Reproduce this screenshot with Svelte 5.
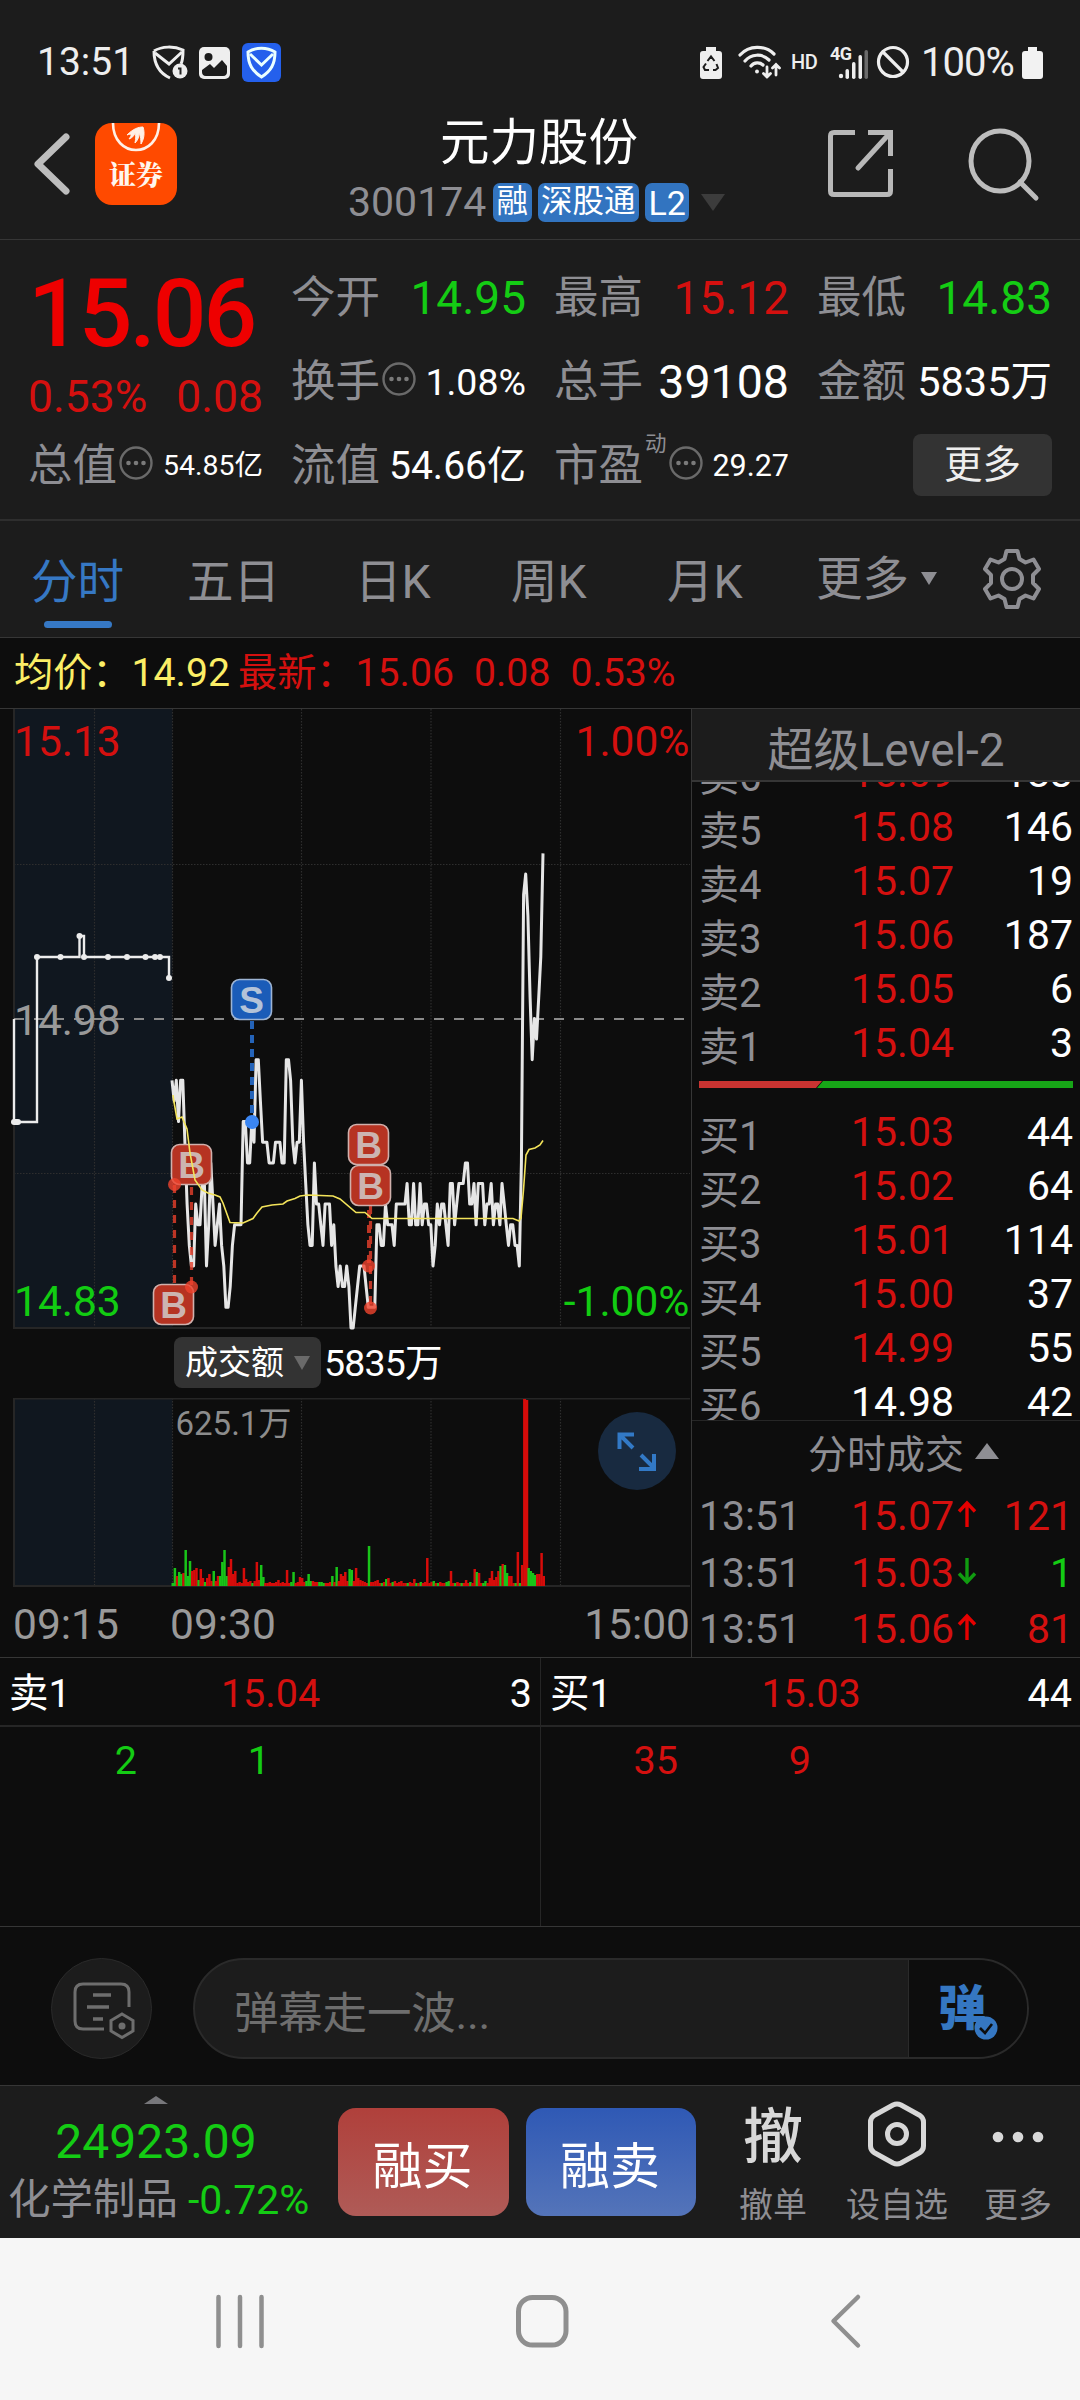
<script>
  const stats = [
    { label: '今开', value: '14.95', tone: 'down', size: 46 },
    { label: '最高', value: '15.12', tone: 'up', size: 46 },
    { label: '最低', value: '14.83', tone: 'down', size: 46 },
    { label: '换手', info: true, value: '1.08%', size: 37.5 },
    { label: '总手', value: '39108', size: 46.5 },
    { label: '金额', value: '5835万', size: 41.5 },
    { label: '总值', info: true, value: '54.85亿', size: 28.5 },
    { label: '流值', value: '54.66亿', size: 39 },
    { label: '市盈', sup: '动', info: true, value: '29.27', size: 30.5 },
  ];

  const tabs = ['分时', '五日', '日K', '周K', '月K'];

  const sells = [
    ['卖6', '15.09', '183'],
    ['卖5', '15.08', '146'],
    ['卖4', '15.07', '19'],
    ['卖3', '15.06', '187'],
    ['卖2', '15.05', '6'],
    ['卖1', '15.04', '3'],
  ];
  const buys = [
    ['买1', '15.03', '44'],
    ['买2', '15.02', '64'],
    ['买3', '15.01', '114'],
    ['买4', '15.00', '37'],
    ['买5', '14.99', '55'],
    ['买6', '14.98', '42'],
  ];
  const prevClose = '14.98';

  const trades = [
    { time: '13:51', price: '15.07', dir: 'up', qty: '121' },
    { time: '13:51', price: '15.03', dir: 'down', qty: '1' },
    { time: '13:51', price: '15.06', dir: 'up', qty: '81' },
  ];

  const queues = [
    { label: '卖1', price: '15.04', qty: '3', tone: 'down', orders: ['2', '1'] },
    { label: '买1', price: '15.03', qty: '44', tone: 'up', orders: ['35', '9'] },
  ];

  // one entry per minute from 09:30, in cents above 14.00
  const prices = [
    95, 94, 95, 93, 95, 95, 92, 89, 87, 86, 86, 89, 88, 88, 90, 90, 86, 88, 91, 89,
    87, 88, 89, 87, 86, 84, 84, 85, 87, 88, 88, 88, 88, 93, 93, 91, 91, 93, 92, 96,
    96, 94, 92, 92, 92, 91, 91, 91, 92, 92, 92, 91, 91, 96, 96, 95, 92, 91, 92, 92,
    95, 92, 90, 88, 87, 87, 91, 89, 89, 88, 87, 89, 89, 89, 87, 88, 86, 85, 86, 85,
    85, 86, 85, 83, 83, 84, 85, 86, 86, 86, 85, 84, 84, 84, 84, 88, 88, 87, 87, 89,
    88, 88, 88, 87, 89, 89, 89, 89, 89, 90, 88, 88, 90, 88, 88, 90, 88, 89, 89, 88,
    88, 86, 87, 89, 88, 89, 89, 88, 87, 90, 90, 88, 89, 90, 90, 90, 91, 91, 89, 89,
    90, 88, 90, 90, 90, 88, 89, 89, 90, 88, 89, 89, 88, 90, 89, 88, 87, 88, 88, 87,
    87, 86, 91, 104, 105, 103, 99, 96, 98, 97, 99, 101, 106,
  ];

  // same minutes, bar height; negative is a falling minute
  const volumes = [
    -3, -18, 10, -14, -12, 13, -36, -10, -25, 15, 16, 18, -6, 17, 8, -4, 8, 12, 5, -15,
    5, 10, -10, -24, -36, -10, 19, 27, 12, 15, 3, 4, 3, 18, 7, 4, 5, -3, 5, 24,
    6, -21, -9, 3, 3, 4, 3, 3, 4, 6, 3, 4, 3, 16, 3, -4, -14, 3, 4, 9,
    8, 4, -5, -12, -5, 5, 4, 4, -4, -4, -3, 3, 3, 4, -10, 4, -19, 5, 12, 10,
    14, 5, -17, -16, 5, 18, 8, 6, 5, 4, 3, -40, 4, 4, 5, 6, 3, -3, 4, -7,
    8, 3, -4, 5, 3, 4, 5, 3, 3, -3, 4, 3, 7, -3, 3, -4, 3, 4, 28, 3,
    4, -5, 3, -3, 4, 3, 3, -4, -5, 15, 3, -3, 4, 3, -3, 3, 6, 3, -4, 3,
    17, -14, 13, 3, -3, -5, 3, 8, 15, 6, 9, 15, -20, 22, -21, -13, 10, 10, 3, -3,
    34, -3, 21, 187, 186, -18, -15, -13, -11, 12, 12, 33, 10,
  ];

  const average = [
    [173, 386], [174, 393], [177, 410], [182, 408], [187, 420], [190, 444], [195, 471],
    [202, 481], [208, 484], [215, 486], [220, 488], [223, 494], [230, 513.5], [243, 514],
    [253, 509.5], [257, 504], [262, 498], [272, 496], [283, 495], [287, 492], [295, 489.5],
    [300, 487], [308, 486], [333, 487], [340, 490], [356, 503.5], [365, 503.5], [372, 509.5],
    [513, 509.5], [519, 512], [521, 509], [523.5, 481], [526, 446], [529, 440.5],
    [535, 439], [540, 436], [543, 431.5],
  ];

  const auctionDots = [[37, 248], [60.5, 248], [79.5, 227], [84, 248], [108, 248], [127, 248], [145.5, 248], [155, 248], [160, 248], [169, 269]];

  const gridX = [94.5, 172.5, 301.5, 431, 560.5];

  const markers = [
    { kind: 'B', x: 191.5, y: 455.5 },
    { kind: 'B', x: 173.5, y: 595.5 },
    { kind: 'S', x: 251.5, y: 290.5 },
    { kind: 'B', x: 368.5, y: 435.5 },
    { kind: 'B', x: 370.5, y: 476.5 },
  ];

  const minuteX = (i) => 172 + i * 2.157;
  const priceY = (cents) => (113 - cents) * 20.63;

  const priceLine = prices.map((p, i) => `${minuteX(i).toFixed(1)},${priceY(p).toFixed(1)}`).join(' ');
  const averageLine = average.map((p) => p.join(',')).join(' ');
</script>

{#snippet info()}
  <svg class="info" width="34" height="34" viewBox="0 0 34 34">
    <circle cx="17" cy="17" r="15.5" fill="none" stroke="#6a6a6a" stroke-width="2.4" />
    <circle cx="9.5" cy="17" r="2.3" fill="#7a7a7a" />
    <circle cx="17" cy="17" r="2.3" fill="#7a7a7a" />
    <circle cx="24.5" cy="17" r="2.3" fill="#7a7a7a" />
  </svg>
{/snippet}

{#snippet bookRow(row, isFlat)}
  <div class="book-row">
    <span class="book-label">{row[0]}</span>
    <span class="book-price" class:up={!isFlat}>{row[1]}</span>
    <span class="book-qty">{row[2]}</span>
  </div>
{/snippet}

<div class="screen">
  <div class="status">
    <span class="clock">13:51</span>
    <svg class="s-shield" width="36" height="36" viewBox="0 0 36 36" fill="none" stroke="#eee" stroke-width="3">
      <path d="M2 6C10 1 22 1 31 5C31 11 31 15 29 19M2 6C2 19 7 28 18 33" />
      <path d="M3 8L17 19L30 7" />
      <circle cx="28" cy="26" r="7.5" fill="#eee" stroke="none" />
      <path d="M26 23.500h2.500v6" stroke="#222" stroke-width="2" />
    </svg>
    <svg class="s-pic" width="31" height="32" viewBox="0 0 31 32">
      <rect width="31" height="32" rx="5" fill="#eee" />
      <circle cx="9.500" cy="10" r="4" fill="#1c1c1c" />
      <path d="M3 25v-2l8-6l4 4l8-8l5 6v6c0 2-1 4-4 4H7c-3 0-4-2-4-4z" fill="#1c1c1c" />
    </svg>
    <svg class="s-app" width="39" height="39" viewBox="0 0 39 39" fill="none" stroke="#eaffff" stroke-width="3">
      <rect width="39" height="39" rx="6" fill="#2460ec" stroke="none" />
      <path d="M6 9C14 4 25 4 33 9C33 21 29 28 19.500 34C10 28 6 21 6 9z" />
      <path d="M8 11L19.500 22L31 11" />
    </svg>

    <svg class="s-save" width="22" height="33" viewBox="0 0 22 33">
      <path d="M6 1h10v4h3q3 0 3 3v22q0 3-3 3H3q-3 0-3-3V8q0-3 3-3h3z" fill="#eee" />
      <path d="M7.500 15L11 10.500L14.500 15M16.500 18L18 22L15.500 24H13M9 24H5L3.500 21L6 17.500" fill="none" stroke="#1c1c1c" stroke-width="2" />
    </svg>
    <svg class="s-wifi" width="44" height="35" viewBox="0 0 44 35" fill="none" stroke="#eee" stroke-width="3.200" stroke-linecap="round">
      <path d="M2 10C11 0 27 0 36 9" />
      <path d="M7 16C13 9 24 8 31 15" />
      <path d="M13 21C16 17 22 17 25 20" />
      <circle cx="19" cy="26.500" r="1.200" fill="#eee" stroke-width="1.500" />
      <path d="M29 22v10M25.500 28.500L29 32L32.500 28.500M38 30V19.500M34.500 23L38 19.500L41.500 23" stroke-width="2.800" />
    </svg>
    <span class="hd">HD</span>
    <svg class="s-signal" width="38" height="35" viewBox="0 0 38 35">
      <text x="0" y="15" font-size="18" font-weight="700" fill="#eee" textLength="22">4G</text>
      <g fill="#eee">
        <circle cx="11" cy="31" r="2.200" />
        <rect x="15.500" y="24" width="3.500" height="10" rx="1.700" />
        <rect x="22" y="17" width="3.500" height="17" rx="1.700" />
        <rect x="28.500" y="10" width="3.500" height="24" rx="1.700" />
        <rect x="34.500" y="5" width="3.500" height="29" rx="1.700" fill="#6a6a6a" />
      </g>
    </svg>
    <svg class="s-block" width="34" height="34" viewBox="0 0 34 34" fill="none" stroke="#eee" stroke-width="3.200">
      <circle cx="17" cy="17" r="14.500" />
      <path d="M7 7L27 27" />
    </svg>
    <span class="percent">100%</span>
    <svg class="s-batt" width="21" height="33" viewBox="0 0 21 33">
      <path d="M6 1h9v4h3q3 0 3 3v22q0 3-3 3H3q-3 0-3-3V8q0-3 3-3h3z" fill="#f2f2f2" />
    </svg>
  </div>

  <header>
    <svg class="back" width="38" height="64" viewBox="0 0 38 64" fill="none" stroke="#bdbdbd" stroke-width="7" stroke-linecap="round" stroke-linejoin="round">
      <path d="M33 5L5 32L33 59" />
    </svg>
    <div class="broker">
      <svg width="82" height="30" viewBox="0 0 82 30" fill="none" stroke="#fff0e6">
        <path d="M18 0C18 36 64 36 64 0" stroke-width="2.600" />
        <path d="M32 12C38 6 43 4 48 4C50 10 49 16 46 21C46 15 45 12 44 10C44 14 43 17 40 20C41 15 41 12 40 10C39 13 37 15 34 16C37 12 37 10 32 12z" fill="#fff0e6" stroke-width="1" />
      </svg>
      <span>证券</span>
    </div>
    <div class="heading">
      <h1>元力股份</h1>
      <div class="code">
        <span>300174</span>
        <b>融</b>
        <b>深股通</b>
        <b>L2</b>
        <i class="caret"></i>
      </div>
    </div>
    <svg class="share" width="68" height="70" viewBox="0 0 68 70" fill="none" stroke="#b8b8b8" stroke-width="5">
      <path d="M28 4.500H7Q3.500 4.500 3.500 8V63Q3.500 66.500 7 66.500H60Q63.500 66.500 63.500 63V41" />
      <path d="M41 4.500H63.500V28" />
      <path d="M63 5L31 40" stroke-linecap="round" />
    </svg>
    <svg class="search" width="74" height="76" viewBox="0 0 74 76" fill="none" stroke="#bdbdbd" stroke-width="5">
      <ellipse cx="34" cy="35" rx="29" ry="30" />
      <path d="M54 56L70 72" stroke-linecap="round" />
    </svg>
  </header>

  <section class="quote">
    <div class="last up">
      <div class="last-price">15.06</div>
      <div class="last-change"><span>0.53%</span><span>0.08</span></div>
    </div>
    {#each stats as stat}
      <div class="stat">
        <span class="stat-label">{stat.label}</span>
        {#if stat.sup}<span class="stat-sup">{stat.sup}</span>{/if}
        {#if stat.info}{@render info()}{/if}
        <span class="stat-value {stat.tone ?? ''}" style="font-size: {stat.size}px">{stat.value}</span>
      </div>
    {/each}
    <div class="stat"><button class="more">更多</button></div>
  </section>

  <nav class="tabs">
    {#each tabs as tab, i}
      <span class="tab" class:active={i === 0}>{tab}</span>
    {/each}
    <span class="tab drop">更多<i></i></span>
    <svg width="60" height="62" viewBox="0 0 60 62" fill="none" stroke="#8e8e93" stroke-width="4" stroke-linejoin="round">
      <path d="M24.500 3h11l2 8l6 3.500l8-3l5.500 9.500l-6 6v8l6 6l-5.500 9.500l-8-3l-6 3.500l-2 8h-11l-2-8l-6-3.500l-8 3L3 41l6-6v-8l-6-6l5.500-9.500l8 3l6-3.500z" />
      <circle cx="30" cy="31" r="10" />
    </svg>
  </nav>

  <div class="legend">
    <span class="avg">均价：14.92</span>
    <span class="newest">最新：15.06</span>
    <span>0.08</span>
    <span>0.53%</span>
  </div>

  <main>
    <div class="charts">
      <svg class="price-chart" width="691" height="621" viewBox="0 0 691 621">
        <rect x="14" y="0" width="158.500" height="619" fill="#10171f" />
        <g stroke="#2e2e2e" stroke-width="1.200" stroke-dasharray="1.500 1.500">
          {#each gridX as x}
            <line x1={x} x2={x} y1="0" y2="619" />
          {/each}
          <line x1="14" x2="690" y1="155.500" y2="155.500" />
          <line x1="14" x2="690" y1="464.500" y2="464.500" />
        </g>
        <path d="M14 0V619H690" fill="none" stroke="#262626" stroke-width="2" />
        <line x1="14" x2="690" y1="310" y2="310" stroke="#8a8a8a" stroke-width="2" stroke-dasharray="10 10" />

        <g font-size="42.500">
          <text x="14" y="46.500" fill="#d4100f">15.13</text>
          <text x="689.500" y="46.500" fill="#d4100f" text-anchor="end">1.00%</text>
          <text x="14" y="326" fill="#999">14.98</text>
          <text x="14" y="606.500" fill="#12cc12">14.83</text>
          <text x="689.500" y="606.500" fill="#12cc12" text-anchor="end">-1.00%</text>
        </g>

        <path d="M14 310V413H37V248H79.500V227H84V248H169V269" fill="none" stroke="#ececec" stroke-width="2.400" />
        {#each auctionDots as [x, y]}
          <circle cx={x} cy={y} r="3" fill="#ececec" />
        {/each}
        <path d="M14 413H18" stroke="#ececec" stroke-width="6" stroke-linecap="round" />

        <polyline points={priceLine} fill="none" stroke="#e6e6e6" stroke-width="3" stroke-linejoin="round" />
        <g stroke="#e8402c" stroke-width="3.200" stroke-dasharray="8 7" opacity="0.8">
          <line x1="174.500" y1="476" x2="174.500" y2="576" />
          <line x1="191.500" y1="478" x2="191.500" y2="578" />
          <line x1="369" y1="456" x2="369" y2="556" stroke-width="4" />
          <line x1="370.500" y1="497" x2="370.500" y2="598" />
        </g>
        <line x1="252" y1="312" x2="252" y2="410" stroke="#2463b8" stroke-width="4" stroke-dasharray="8 6" />
        {#each markers as m}
          <g>
            <rect x={m.x - 20} y={m.y - 20} width="40" height="40" rx="8" fill={m.kind === 'B' ? '#b63322' : '#1b5cb8'} stroke={m.kind === 'B' ? '#d0b0ac' : '#9db4d4'} stroke-width="1.600" />
            <text class="marker" x={m.x} y={m.y + 13.5} fill={m.kind === 'B' ? '#ccb4b1' : '#b4c3d8'}>{m.kind}</text>
          </g>
        {/each}
        <g fill="#f0442e" opacity="0.8">
          <circle cx="174.500" cy="475.500" r="6.500" />
          <circle cx="191.500" cy="578" r="6.500" />
          <circle cx="368.500" cy="557" r="6.500" />
          <circle cx="370.500" cy="599" r="6.500" />
        </g>
        <circle cx="252" cy="413" r="7" fill="#3b86f2" />
        <polyline points={averageLine} fill="none" stroke="#f3e35a" stroke-width="1.600" />
      </svg>

      <div class="volume-bar">
        <button>成交额<i></i></button>
        <span>5835万</span>
      </div>

      <div class="volume">
        <svg width="691" height="191" viewBox="0 0 691 191">
          <rect x="14" y="0" width="158.500" height="188" fill="#10171f" />
          <g stroke="#2e2e2e" stroke-width="1.200" stroke-dasharray="1.500 1.500">
            {#each gridX as x}
              <line x1={x} x2={x} y1="0" y2="188" />
            {/each}
          </g>
          <path d="M690 0.500H14V188H690" fill="none" stroke="#262626" stroke-width="2" />
          {#each volumes as v, i}
            <rect x={minuteX(i) - 0.5} y={188 - Math.abs(v)} width={Math.abs(v) > 100 ? 3 : 2.5} height={Math.abs(v)} fill={v > 0 ? '#d60c0a' : '#19c419'} />
          {/each}
          <text x="175.500" y="37" font-size="33" fill="#8c8c8c">625.1万</text>
        </svg>
        <button class="expand" aria-label="全屏">
          <svg width="78" height="78" viewBox="0 0 78 78" fill="none" stroke="#3279c6" stroke-width="4">
            <path d="M36 22.500H21.500V37M22 23L35 36M41 57H56V42M43 43L56 56" />
          </svg>
        </button>
      </div>

      <div class="axis">
        <span>09:15</span>
        <span>09:30</span>
        <span class="close-time">15:00</span>
      </div>
    </div>

    <div class="side">
      <div class="level2">超级Level-2</div>
      <div class="book">
        {#each sells as row}
          {@render bookRow(row, row[1] === prevClose)}
        {/each}
        <div class="ratio">
          <svg width="374" height="7" viewBox="0 0 374 7">
            <path d="M0 0H123L117 7H0z" fill="#c93331" />
            <path d="M124 0H374V7H118z" fill="#17a517" />
          </svg>
        </div>
        {#each buys as row}
          {@render bookRow(row, row[1] === prevClose)}
        {/each}
      </div>
      <div class="trades-head">分时成交<i></i></div>
      {#each trades as t}
        <div class="trade">
          <span class="trade-time">{t.time}</span>
          <span class="up">{t.price}</span>
          <svg class={t.dir} width="20" height="28" viewBox="0 0 20 28" fill="none" stroke-width="3.400">
            <path d={t.dir === 'up' ? 'M10 27V3M2 11.500L10 3L18 11.500' : 'M10 1V25M2 16.500L10 25L18 16.500'} />
          </svg>
          <span class="trade-qty {t.dir}">{t.qty}</span>
        </div>
      {/each}
    </div>
  </main>

  <section class="queues">
    {#each queues as q}
      <div class="queue">
        <div class="queue-head">
          <span>{q.label}</span>
          <span class="up">{q.price}</span>
          <span>{q.qty}</span>
        </div>
        <div class="queue-orders {q.tone}">
          {#each q.orders as n}<span>{n}</span>{/each}
        </div>
      </div>
    {/each}
  </section>

  <div class="comment">
    <button class="comment-settings" aria-label="弹幕设置">
      <svg width="64" height="60" viewBox="0 0 64 60" fill="none" stroke="#6e6e6e" stroke-width="3">
        <path d="M32 48H11Q3 48 3 40V11Q3 3 11 3H49Q57 3 57 11V26" />
        <path d="M21 14H39M15 26H37M21 38H31" stroke-width="3.400" />
        <path d="M50 33L61 39.500V50L50 56.500L39 50V39.500z" />
        <circle cx="50" cy="45" r="3.500" fill="#6e6e6e" stroke="none" />
      </svg>
    </button>
    <div class="comment-box">
      <span class="placeholder">弹幕走一波...</span>
      <div class="danmu">
        <span>弹</span>
        <svg width="24" height="24" viewBox="0 0 24 24">
          <circle cx="12" cy="12" r="11.500" fill="#3577c2" />
          <path d="M6 12L11 17L18 8" fill="none" stroke="#0d0d0d" stroke-width="2.600" />
        </svg>
      </div>
    </div>
  </div>

  <footer>
    <div class="sector">
      <i></i>
      <div class="sector-index">24923.09</div>
      <div class="sector-name">化学制品<span>-0.72%</span></div>
    </div>
    <button class="trade-btn buy">融买</button>
    <button class="trade-btn sell">融卖</button>
    <div class="action cancel">
      <b>撤</b>
      <span>撤单</span>
    </div>
    <div class="action pick">
      <svg width="60" height="66" viewBox="0 0 60 66" fill="none" stroke="#d8d8d8" stroke-width="5" stroke-linejoin="round">
        <path d="M26 4Q30 2 34 4L53 14.500Q56.500 17 56.500 21V45Q56.500 49 53 51.500L34 62Q30 64 26 62L7 51.500Q3.500 49 3.500 45V21Q3.500 17 7 14.500z" />
        <circle cx="30" cy="33" r="9.500" stroke-width="5" />
      </svg>
      <span>设自选</span>
    </div>
    <div class="action others">
      <svg width="54" height="66" viewBox="0 0 54 66" fill="#d8d8d8">
        <circle cx="7" cy="36" r="5.300" />
        <circle cx="27" cy="36" r="5.300" />
        <circle cx="47" cy="36" r="5.300" />
      </svg>
      <span>更多</span>
    </div>
  </footer>

  <div class="system-nav">
    <svg width="1080" height="162" viewBox="0 0 1080 162" fill="none" stroke="#8f8f8f">
      <path d="M218.500 59V108M240 59V108M261.500 59V108" stroke-width="4.500" stroke-linecap="round" />
      <rect x="518.500" y="59.500" width="47.500" height="47.500" rx="14" stroke-width="5" />
      <path d="M858 59L833.500 83L858 107.500" stroke-width="4.500" stroke-linecap="round" stroke-linejoin="round" />
    </svg>
  </div>
</div>

<style>
  :global(body) {
    margin: 0;
    background: #0d0d0d;
  }

  .screen {
    width: 1080px;
    height: 2400px;
    overflow: hidden;
    background: #0d0d0d;
    color: #fff;
    font-family: Roboto, "Noto Sans CJK SC", sans-serif;
    white-space: nowrap;
  }

  .screen * {
    box-sizing: border-box;
  }

  svg {
    display: block;
    flex: none;
  }

  button {
    padding: 0;
    border: none;
    font-family: inherit;
  }

  .up {
    color: #d4100f;
    stroke: none;
  }

  .down {
    color: #14cc14;
  }

  /* status bar */
  .status {
    display: flex;
    align-items: center;
    height: 124px;
    padding: 0 37px;
    background: #1c1c1c;
    color: #eee;
  }

  .clock {
    width: 93px;
    font-size: 39px;
  }

  .s-shield {
    margin: 2px 0 0 22px;
  }

  .s-pic {
    margin: 2px 0 0 11px;
  }

  .s-app {
    margin: 1px 0 0 12px;
  }

  .s-save {
    margin-left: auto;
  }

  .s-wifi {
    margin-left: 16px;
  }

  .hd {
    width: 27px;
    margin-left: 9px;
    font-size: 20px;
    font-weight: 500;
    letter-spacing: -0.5px;
  }

  .s-signal {
    margin-left: 12px;
    overflow: visible;
  }

  .s-block {
    margin-left: 8px;
  }

  .percent {
    width: 94px;
    margin-left: 11px;
    font-size: 40px;
    letter-spacing: -1px;
  }

  .s-batt {
    margin: 0 0 0 7px;
  }

  /* title */
  header {
    display: flex;
    align-items: flex-start;
    height: 116px;
    border-bottom: 1px solid #363636;
    background: #1c1c1c;
  }

  .back {
    margin: 8px 0 0 33px;
  }

  .broker {
    width: 82px;
    height: 82px;
    margin: -1px 0 0 24px;
    border-radius: 17px;
    background: #ff4a00;
    text-align: center;
  }

  .broker span {
    display: block;
    margin-top: 1px;
    font-family: "Noto Serif CJK SC", "Noto Sans CJK SC", serif;
    font-size: 27px;
    font-weight: 900;
    line-height: 40px;
    color: #fff6ee;
  }

  .heading {
    width: 380px;
    margin-left: 171px;
  }

  h1 {
    margin: -11px 0 0;
    padding-left: 92px;
    font-size: 49.500px;
    font-weight: 400;
    line-height: 60px;
  }

  .code {
    display: flex;
    align-items: center;
    height: 39px;
    margin-top: 10px;
    font-size: 41px;
    color: #8e8e93;
  }

  .code span {
    width: 145px;
    line-height: 41px;
  }

  .code span,
  .code b {
    flex: none;
  }

  .code b {
    height: 39px;
    margin-right: 6px;
    padding: 0 3.500px;
    border-radius: 7px;
    background: #3274c0;
    color: #fff;
    font-size: 31.500px;
    font-weight: 400;
    line-height: 38px;
  }

  .code b:last-of-type {
    font-size: 34px;
    line-height: 40px;
  }

  .caret {
    margin-left: 6px;
    border: 12.500px solid transparent;
    border-top: 17px solid #3c3c3c;
    border-bottom: 0;
  }

  .share {
    margin: 4px 0 0 99px;
  }

  .search {
    margin: 2px 0 0 71px;
  }

  /* quote panel */
  .quote {
    display: grid;
    grid-template-columns: repeat(4, 234px);
    grid-template-rows: repeat(3, 84px);
    column-gap: 29px;
    height: 281px;
    padding: 16px 28px 0 29px;
    border-bottom: 2px solid #2e2e2e;
    background: #1c1c1c;
  }

  .last {
    grid-row: span 2;
  }

  .last-price {
    margin-left: -1px;
    color: #ee0000;
    font-size: 94.500px;
    font-weight: 500;
    line-height: 115px;
    letter-spacing: -3px;
  }

  .last-change {
    display: flex;
    justify-content: space-between;
    margin-left: -1px;
    font-size: 44.500px;
    line-height: 53px;
  }

  .stat {
    display: flex;
    align-items: center;
  }

  .stat-label {
    margin-left: -1px;
    color: #8e8e93;
    font-size: 44.500px;
    line-height: 84px;
  }

  .stat-sup {
    width: 22px;
    margin: -44px 0 0 2px;
    color: #8e8e93;
    font-size: 21.500px;
    line-height: 26px;
  }

  .info {
    margin: -6px 0 0 2px;
  }

  .stat-value {
    margin-left: auto;
    line-height: 84px;
  }

  .more {
    width: 139px;
    height: 62px;
    margin: -3px 0 0 auto;
    border-radius: 8px;
    background: #333;
    color: #eee;
    font-size: 38.500px;
    line-height: 62px;
  }

  /* tabs */
  .tabs {
    display: flex;
    height: 117px;
    padding-left: 31px;
    border-bottom: 1px solid #363636;
    background: #1c1c1c;
    color: #8e8e93;
    font-size: 46.500px;
    line-height: 122px;
  }

  .tab {
    position: relative;
    width: 156px;
  }

  .tab:nth-child(2) {
    width: 168px;
  }

  .tab:nth-child(5) {
    width: 149px;
  }

  .tab.active {
    color: #3678c4;
  }

  .tab.active::after {
    content: "";
    position: absolute;
    left: 13px;
    bottom: 9px;
    width: 68px;
    height: 7px;
    border-radius: 4px;
    background: #3678c4;
  }

  .tab.drop {
    display: flex;
    align-items: center;
    width: 166px;
  }

  .drop i {
    margin: -2px 0 0 12px;
    border: 8px solid transparent;
    border-top: 13px solid #8e8e93;
    border-bottom: 0;
  }

  .tabs svg {
    margin-top: 27px;
  }

  .legend {
    display: flex;
    height: 71px;
    padding-left: 14px;
    border-bottom: 1px solid #363636;
    color: #d4100f;
    font-size: 39.200px;
    line-height: 70px;
  }

  .legend span {
    margin-right: 20px;
  }

  .legend .avg {
    margin-right: 8px;
    color: #fbee66;
  }

  /* charts */
  main {
    display: flex;
    height: 949px;
    border-bottom: 1px solid #363636;
  }

  .charts {
    width: 691px;
  }

  .price-chart {
    overflow: visible;
  }

  .marker {
    font-family: "Liberation Sans", sans-serif;
    font-size: 37px;
    font-weight: 700;
    text-anchor: middle;
  }

  .volume-bar {
    display: flex;
    align-items: center;
    height: 68px;
    padding: 0 0 2px 174px;
    font-size: 37.500px;
    line-height: 64px;
  }

  .volume-bar button {
    display: flex;
    align-items: center;
    width: 147px;
    height: 51px;
    margin: -1px 3px 0 0;
    padding-left: 11px;
    border-radius: 8px;
    background: #333;
    color: #fff;
    font-size: 33px;
    line-height: 50px;
  }

  .volume-bar i {
    margin-left: 10px;
    border: 8.500px solid transparent;
    border-top: 14px solid #6a6a6a;
    border-bottom: 0;
  }

  .volume-bar span {
    letter-spacing: -0.800px;
  }

  .volume {
    position: relative;
  }

  .expand {
    position: absolute;
    top: 14px;
    left: 598px;
    width: 78px;
    height: 78px;
    border-radius: 50%;
    background: #182a40;
  }

  .axis {
    display: flex;
    height: 69px;
    padding-left: 13px;
    color: #999;
    font-size: 42.500px;
    line-height: 71px;
  }

  .axis span {
    width: 157px;
  }

  .axis .close-time {
    width: auto;
    margin: 0 1px 0 auto;
  }

  /* order book */
  .side {
    width: 389px;
    border-left: 1px solid #363636;
  }

  .level2 {
    height: 73px;
    border-bottom: 2px solid #363636;
    background: #1c1c1c;
    color: #8e8e93;
    font-size: 46px;
    line-height: 82px;
    text-align: center;
  }

  .book {
    height: 639px;
    overflow: hidden;
    border-bottom: 1px solid #262626;
  }

  .book-row {
    display: flex;
    height: 54px;
    font-size: 41px;
    line-height: 54px;
  }

  .book-row:first-child {
    margin-top: -36px;
  }

  .book-label {
    width: 159px;
    padding: 5px 0 0 7px;
    color: #8e8e93;
    font-size: 40px;
  }

  .book-qty {
    margin: 0 7px 0 auto;
  }

  .ratio {
    height: 35px;
    padding: 11px 0 0 7px;
  }

  .trades-head {
    display: flex;
    align-items: center;
    height: 67px;
    padding-left: 116px;
    color: #8e8e93;
    font-size: 39px;
    line-height: 64px;
  }

  .trades-head i {
    margin: -8px 0 0 11px;
    border: 12px solid transparent;
    border-top: 0;
    border-bottom: 16px solid #8e8e93;
  }

  .trade {
    display: flex;
    height: 56.700px;
    font-size: 41px;
    line-height: 57px;
  }

  .trade-time {
    width: 159px;
    padding-left: 7px;
    color: #8e8e93;
  }

  .trade svg {
    margin: 12px 0 0 3px;
  }

  .trade svg.up {
    stroke: #e60000;
  }

  .trade svg.down {
    stroke: #109c10;
  }

  .trade-qty {
    margin: 0 7px 0 auto;
  }

  /* best bid and ask queues */
  .queues {
    display: flex;
    height: 269px;
    border-bottom: 1px solid #363636;
    font-size: 39.500px;
  }

  .queue {
    width: 540px;
  }

  .queue + .queue {
    border-left: 1px solid #262626;
  }

  .queue-head {
    display: flex;
    justify-content: space-between;
    height: 69px;
    padding: 0 8px 0 9px;
    border-bottom: 2px solid #262626;
    line-height: 71px;
  }

  .queue-head span:not(.up) {
    width: 60px;
  }

  .queue-head span:last-child {
    text-align: right;
  }

  .queue-orders {
    display: flex;
    padding-left: 4px;
    line-height: 67px;
  }

  .queue-orders span {
    width: 133px;
    text-align: right;
  }

  /* comment bar */
  .comment {
    display: flex;
    height: 158px;
    padding: 31px 0 0 51px;
  }

  .comment-settings {
    display: flex;
    align-items: center;
    justify-content: center;
    width: 101px;
    height: 101px;
    padding: 4px 0 0 4px;
    border: 1px solid #2a2a2a;
    border-radius: 50%;
    background: #1c1c1c;
  }

  .comment-box {
    display: flex;
    width: 836px;
    height: 101px;
    margin-left: 41px;
    overflow: hidden;
    border: 2px solid #2a2a2a;
    border-radius: 51px;
    background: #1c1c1c;
  }

  .placeholder {
    width: 713px;
    padding-left: 39px;
    color: #6e6e6e;
    font-size: 44.500px;
    letter-spacing: -0.200px;
    line-height: 109px;
  }

  .danmu {
    position: relative;
    flex: 1;
    border-left: 1px solid #2a2a2a;
    background: #0d0d0d;
    color: #3577c2;
    font-size: 48px;
    font-weight: 900;
    line-height: 98px;
    padding-left: 29px;
  }

  .danmu svg {
    position: absolute;
    top: 56px;
    left: 65px;
  }

  /* bottom actions */
  footer {
    display: flex;
    height: 153px;
    border-top: 1px solid #363636;
    background: #1c1c1c;
  }

  .sector {
    width: 312px;
    padding-top: 10px;
    color: #14cc14;
    text-align: center;
  }

  .sector i {
    display: block;
    width: 0;
    margin: 0 auto;
    border: 12px solid transparent;
    border-top: 0;
    border-bottom: 8px solid #77777b;
  }

  .sector-index {
    font-size: 48px;
    line-height: 75px;
  }

  .sector-name {
    display: flex;
    padding-left: 8px;
    color: #8e8e93;
    font-size: 42.500px;
    line-height: 42px;
  }

  .sector-name span {
    margin-left: 10px;
    color: #14cc14;
    font-size: 41px;
  }

  .trade-btn {
    width: 171px;
    height: 108px;
    margin: 22px 0 0 26px;
    padding-right: 2px;
    border-radius: 18px;
    color: #fff;
    font-size: 50px;
    line-height: 118px;
  }

  .trade-btn.buy {
    background: linear-gradient(#b0403b, #af5b57);
  }

  .trade-btn.sell {
    width: 170px;
    margin-left: 17px;
    background: linear-gradient(#2f59b5, #5474b9);
  }

  .action {
    display: flex;
    flex-direction: column;
    align-items: center;
    height: 140px;
    color: #8e8e93;
    font-size: 34px;
    line-height: 44px;
  }

  .action svg,
  .action b {
    height: 66px;
    margin: 15px 0 16px;
  }

  .action b {
    color: #d8d8d8;
    font-size: 60px;
    font-weight: 500;
    line-height: 74px;
  }

  .cancel {
    margin-left: 43px;
  }

  .pick {
    margin-left: 39px;
  }

  .others {
    margin-left: 36px;
  }

  .system-nav {
    height: 162px;
    background: #f6f6f6;
  }
</style>
